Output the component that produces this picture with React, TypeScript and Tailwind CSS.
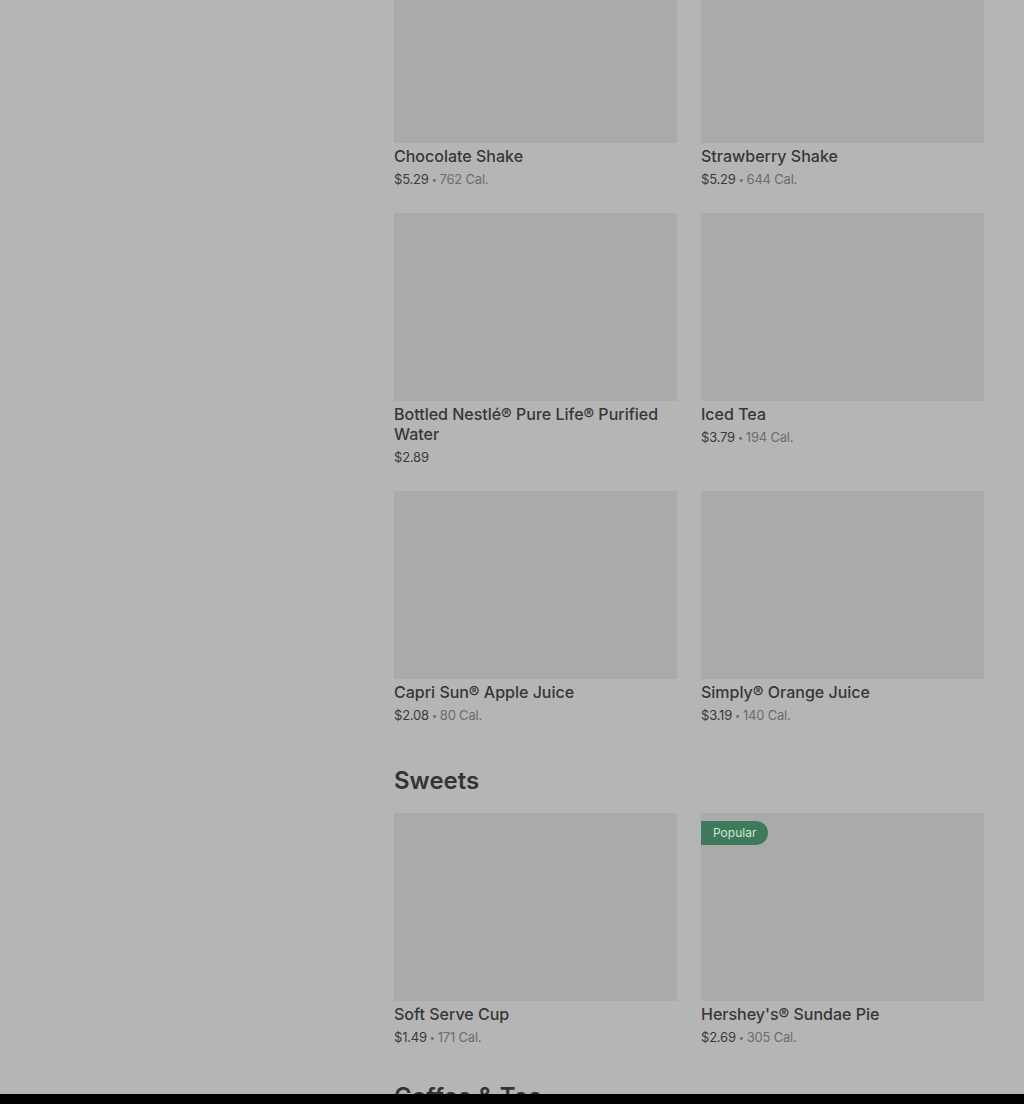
const sections = [
  {
    title: null as string | null,
    items: [
      { name: "Chocolate Shake", price: "$5.29", cal: "762 Cal." },
      { name: "Strawberry Shake", price: "$5.29", cal: "644 Cal." },
      { name: "Bottled Nestlé® Pure Life® Purified Water", price: "$2.89", cal: null },
      { name: "Iced Tea", price: "$3.79", cal: "194 Cal." },
      { name: "Capri Sun® Apple Juice", price: "$2.08", cal: "80 Cal." },
      { name: "Simply® Orange Juice", price: "$3.19", cal: "140 Cal." },
    ],
  },
  {
    title: "Sweets",
    items: [
      { name: "Soft Serve Cup", price: "$1.49", cal: "171 Cal." },
      { name: "Hershey's® Sundae Pie", price: "$2.69", cal: "305 Cal.", popular: true },
    ],
  },
  {
    title: "Coffee & Tea",
    items: [],
  },
]

type Item = { name: string; price: string; cal: string | null; popular?: boolean }

function MenuCard({ item }: { item: Item }) {
  return (
    <div className="flex flex-col">
      <div className="relative h-[188px] bg-[#aaaaaa]">
        {item.popular && (
          <span className="absolute left-0 top-2 h-6 px-3 flex items-center rounded-r-full bg-[#3e7a5b] text-[12px] text-[#d3e2d9]">
            Popular
          </span>
        )}
      </div>
      <h3 className="mt-[3px] text-[16px] leading-5 font-medium text-[#373737]">{item.name}</h3>
      <p className="mt-[3px] h-5 flex items-center text-[13px] leading-5 tracking-[-0.2px] text-[#3a3a3a]">
        <span>{item.price}</span>
        {item.cal && (
          <>
            <span className="mx-[3px] text-[9px] leading-none text-[#6c6c6c]">•</span>
            <span className="text-[#6c6c6c]">{item.cal}</span>
          </>
        )}
      </p>
    </div>
  )
}

export default function App() {
  return (
    <div className="h-[1104px] bg-black" style={{ fontFamily: "Inter, 'Noto Sans', sans-serif" }}>
      <div className="h-[1094px] bg-[#b5b5b5] overflow-hidden flex">
        {/* sidebar area (empty under overlay) */}
        <div className="w-[394px] shrink-0" />

        <main className="w-[590px] -mt-[45px]">
          {sections.map((section, i) => (
            <section key={i}>
              {section.title && (
                <h2
                  className={`${i === 1 ? "mt-[18px]" : "mt-[12px]"} mb-[18px] text-[24px] leading-7 font-semibold text-[#343434]`}
                >
                  {section.title}
                </h2>
              )}
              {section.items.length > 0 && (
                <div className="grid grid-cols-2 gap-x-6 gap-y-6 pb-6">
                  {section.items.map((item) => (
                    <MenuCard key={item.name} item={item} />
                  ))}
                </div>
              )}
            </section>
          ))}
        </main>
      </div>
    </div>
  )
}
